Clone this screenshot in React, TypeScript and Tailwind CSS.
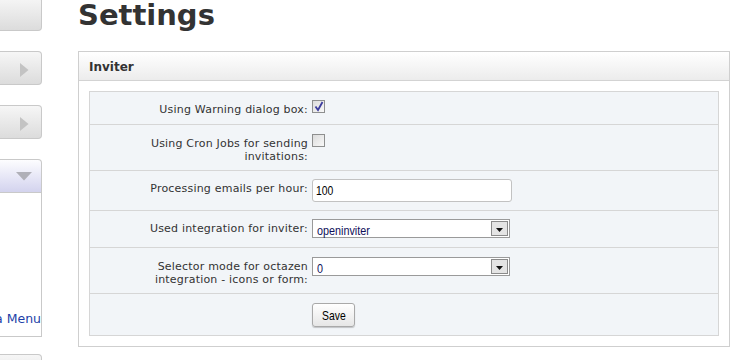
import React from "react";

const labelFont = { fontFamily: '"DejaVu Sans", Verdana, sans-serif' };
const ctrlFont = { fontFamily: '"Liberation Sans", Arial, sans-serif' };

function SideButton({ arrow = false, className = "" }: { arrow?: boolean; className?: string }) {
  return (
    <div
      className={`relative h-[34px] w-[42px] shrink-0 rounded-r-[4px] border border-l-0 border-[#c9c9c9] bg-gradient-to-b from-[#f6f6f6] to-[#dcdcdc] ${className}`}
    >
      {arrow && (
        <svg className="absolute left-[20px] top-[11px]" width="9" height="14" viewBox="0 0 9 14">
          <path d="M0 0 L8.5 7 L0 14 Z" fill="#c3c3c3" />
        </svg>
      )}
    </div>
  );
}

function Checkbox({ checked = false }: { checked?: boolean }) {
  return (
    <div className="relative h-[13px] w-[13px] border border-[#8e8f8f] bg-gradient-to-br from-[#dcdcdc] to-[#f8f8f8]">
      {checked && (
        <svg className="absolute left-[1px] top-[0px]" width="10" height="11" viewBox="0 0 10 11">
          <path d="M1.5 5.5 L4 9 L8.5 1" fill="none" stroke="#3d3d9e" strokeWidth="1.8" />
        </svg>
      )}
    </div>
  );
}

function Select({ value }: { value: string }) {
  return (
    <div className="flex h-[19px] w-[198px] items-center border border-[#9a9a9a] bg-white p-[1px]">
      <span className="flex-1 pl-[3px]">
        <span
          className="inline-block origin-left scale-x-[0.83] text-[13px] leading-none text-[#10105a]"
          style={ctrlFont}
        >
          {value}
        </span>
      </span>
      <div className="flex h-[15px] w-[17px] items-end justify-center border border-[#8a8a8a] bg-[#e4e4e4] pb-[3px]">
        <svg width="7" height="4" viewBox="0 0 7 4">
          <path d="M0 0 H7 L3.5 4 Z" fill="#111" />
        </svg>
      </div>
    </div>
  );
}

function Row({
  label,
  h,
  pt = "pt-[8px]",
  children,
  last = false,
}: {
  label?: React.ReactNode;
  h: string;
  pt?: string;
  children: React.ReactNode;
  last?: boolean;
}) {
  return (
    <div className={`grid grid-cols-[222px_1fr] items-start ${h} ${pt} ${last ? "" : "border-b border-[#d6d6d6]"}`}>
      <div
        className="pr-[4px] pt-[3px] text-right text-[11px] leading-[13px] tracking-[0.2px] text-[#333]"
        style={labelFont}
      >
        {label}
      </div>
      <div>{children}</div>
    </div>
  );
}

export default function App() {
  return (
    <div className="flex h-[360px] w-[748px] overflow-hidden bg-white">
      <div className="-mt-[3px] flex w-[42px] shrink-0 flex-col">
        <SideButton />
        <SideButton arrow className="mt-[20px]" />
        <SideButton arrow className="mt-[20px]" />
        <div className="mt-[20px] w-[42px] shrink-0">
          <div className="relative h-[34px] rounded-tr-[4px] border border-l-0 border-[#c9c9c9] bg-gradient-to-b from-[#fdfdff] to-[#d3d3ee]">
            <svg className="absolute left-[16px] top-[12px]" width="16" height="9" viewBox="0 0 16 9">
              <path d="M0 0 H16 L8 8.5 Z" fill="#b0b0b8" />
            </svg>
          </div>
          <div className="flex h-[144px] items-end justify-end overflow-hidden border-r border-b border-[#c9c9c9] bg-white pb-[10px]">
            <span className="whitespace-nowrap text-[12.5px] leading-[14px] text-[#1d3fa8]" style={labelFont}>
              a Menu
            </span>
          </div>
        </div>
        <SideButton className="mt-[17px]" />
      </div>

      <div className="ml-[36px] flex w-[652px] shrink-0 flex-col">
        <h1 className="h-[32px] text-[29px] font-bold leading-[30px] text-[#333]" style={labelFont}>
          Settings
        </h1>
        <div className="mt-[19px] border border-[#cfcfcf] bg-white">
          <div className="flex h-[29px] items-center border-b border-[#d3d3d3] bg-gradient-to-b from-[#ffffff] to-[#ececec] pl-[10px] pt-[2px]">
            <span className="text-[12px] font-bold leading-[14px] text-[#333]" style={labelFont}>
              Inviter
            </span>
          </div>
          <div className="mx-[10px] my-[10px] border border-[#d6d6d6] bg-[#f2f5f8]">
            <Row label="Using Warning dialog box:" h="h-[33px]">
              <Checkbox checked />
            </Row>
            <Row
              label={
                <>
                  Using Cron Jobs for sending
                  <br />
                  invitations:
                </>
              }
              h="h-[46px]"
              pt="pt-[9px]"
            >
              <Checkbox />
            </Row>
            <Row label="Processing emails per hour:" h="h-[40px]">
              <div className="flex h-[23px] w-[200px] items-center rounded-[3px] border border-[#c2c2c2] bg-white pl-[3px]">
                <span
                  className="inline-block origin-left scale-x-[0.8] text-[13px] leading-none text-black"
                  style={ctrlFont}
                >
                  100
                </span>
              </div>
            </Row>
            <Row label="Used integration for inviter:" h="h-[37px]">
              <Select value="openinviter" />
            </Row>
            <Row
              label={
                <>
                  Selector mode for octazen
                  <br />
                  integration - icons or form:
                </>
              }
              h="h-[46px]"
              pt="pt-[9px]"
            >
              <Select value="0" />
            </Row>
            <Row h="h-[41px]" pt="pt-[9px]" last>
              <button className="flex h-[24px] w-[43px] items-center justify-center rounded-[3px] border border-[#a9a9a9] bg-gradient-to-b from-[#ffffff] to-[#e6e6e6] shadow-[0_1px_1px_rgba(0,0,0,0.2)]">
                <span
                  className="inline-block scale-x-[0.8] text-[13px] leading-none text-black"
                  style={ctrlFont}
                >
                  Save
                </span>
              </button>
            </Row>
          </div>
        </div>
      </div>
    </div>
  );
}
